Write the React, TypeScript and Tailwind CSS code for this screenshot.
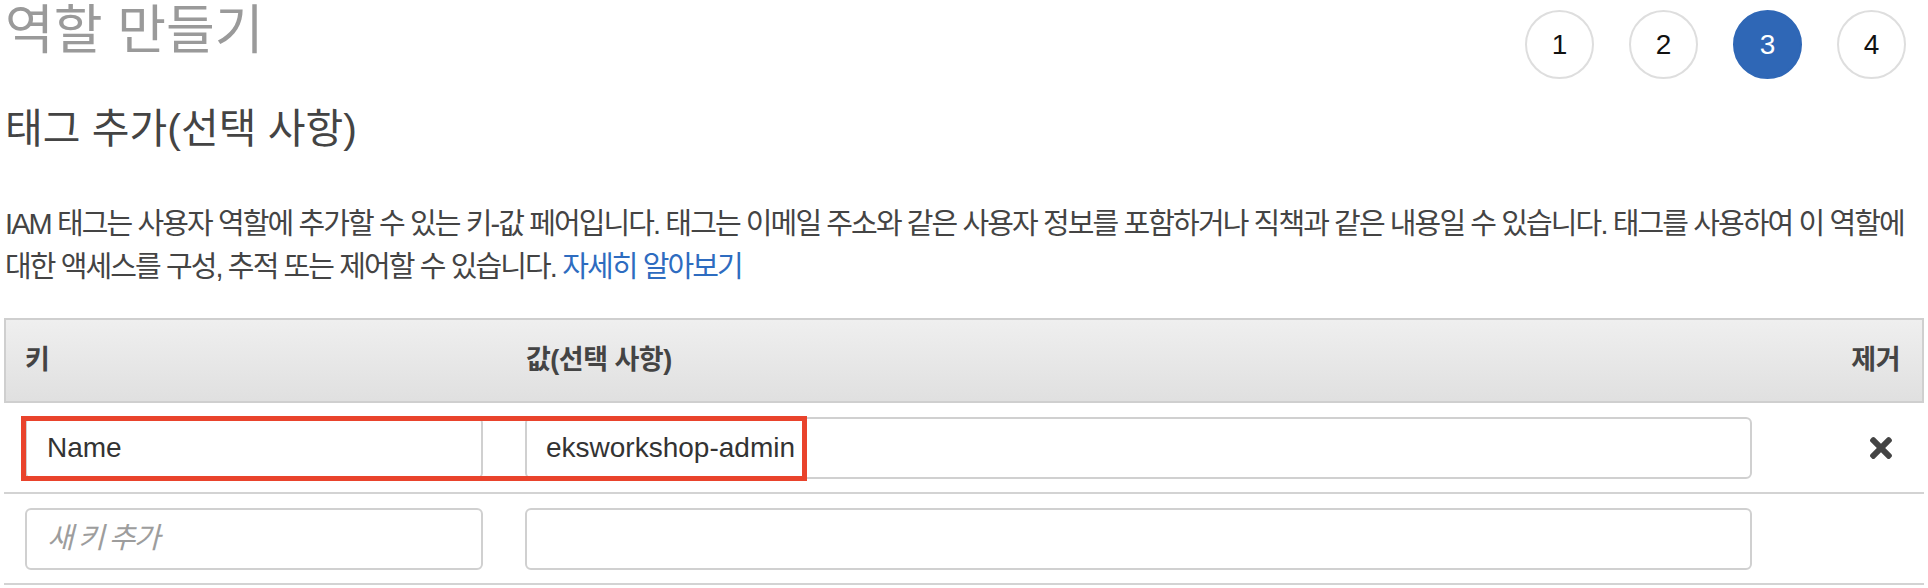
import React from "react";
import { FaTimes } from "react-icons/fa";

const font = "font-['Liberation_Sans','Noto_Sans_CJK_KR',sans-serif]";

function Step({ n, active }: { n: number; active?: boolean }) {
  return (
    <div
      className={
        active
          ? "w-[69px] h-[69px] rounded-full bg-[#2f67b6] border-2 border-[#2f67b6] flex items-center justify-center text-white text-[28px]"
          : "w-[69px] h-[69px] rounded-full bg-white border-2 border-[#dedede] flex items-center justify-center text-[#111] text-[28px]"
      }
    >
      {n}
    </div>
  );
}

export default function App() {
  return (
    <div className={`${font} bg-white w-[1928px] h-[588px] overflow-hidden px-[4px]`}>
      {/* top row */}
      <div className="h-[80px] flex justify-between items-start">
        <div className="pt-[4px] pl-[1px] text-[53px] leading-[53px] tracking-[0px] text-[#9a9a9a]">
          역할 만들기
        </div>
        <div className="pt-[10px] mr-[18px] flex gap-[35px]">
          <Step n={1} />
          <Step n={2} />
          <Step n={3} active />
          <Step n={4} />
        </div>
      </div>

      {/* subtitle */}
      <div className="mt-[29px] pl-[1px] text-[41px] leading-[40px] tracking-[0px] text-[#444]">
        태그 추가(선택 사항)
      </div>

      {/* paragraph */}
      <div className="mt-[54px] pl-[1px] text-[29px] leading-[43px] tracking-[-1.9px] text-[#444]">
        <div className="whitespace-nowrap">
          IAM 태그는 사용자 역할에 추가할 수 있는 키-값 페어입니다. 태그는 이메일 주소와 같은 사용자 정보를 포함하거나 직책과 같은 내용일 수 있습니다. 태그를 사용하여 이 역할에
        </div>
        <div className="whitespace-nowrap">
          대한 액세스를 구성, 추적 또는 제어할 수 있습니다.{" "}
          <span className="text-[#2e6cc0]">자세히 알아보기</span>
        </div>
      </div>

      {/* table */}
      <div className="mt-[29px]">
        <div className="h-[85px] border-2 border-[#cfcfcf] bg-linear-to-b from-[#efefef] to-[#e0e0e0] flex items-center text-[27px] tracking-[-0.5px] font-bold text-[#444]">
          <div className="pl-[19px] w-[520px]">키</div>
          <div className="w-[1227px]">값(선택 사항)</div>
          <div className="flex-1 text-right pr-[22px]">제거</div>
        </div>

        {/* row 1 */}
        <div className="relative h-[91px] border-b-2 border-[#d3d3d3] flex items-center pl-[21px]">
          <div className="w-[458px] h-[62px] border-2 border-[#d0d0d0] rounded-[6px] flex items-center pl-[20px] text-[28px] text-[#333]">
            Name
          </div>
          <div className="ml-[42px] w-[1227px] h-[62px] border-2 border-[#d0d0d0] rounded-[6px] flex items-center pl-[19px] text-[28px] text-[#333]">
            eksworkshop-admin
          </div>
          <div className="flex-1 flex justify-end pr-[27px]">
            <FaTimes size={32} className="text-[#444]" />
          </div>
          <div className="absolute top-[13px] left-[17px] w-[786px] h-[65px] border-[5px] border-[#e9432c]" />
        </div>

        {/* row 2 */}
        <div className="h-[91px] border-b-2 border-[#d3d3d3] flex items-center pl-[21px]">
          <div className="w-[458px] h-[62px] border-2 border-[#d0d0d0] rounded-[6px] flex items-center pl-[20px] text-[29px] tracking-[-1.9px] italic text-[#9d9d9d]">
            새 키 추가
          </div>
          <div className="ml-[42px] w-[1227px] h-[62px] border-2 border-[#d0d0d0] rounded-[6px]" />
        </div>
      </div>
    </div>
  );
}
